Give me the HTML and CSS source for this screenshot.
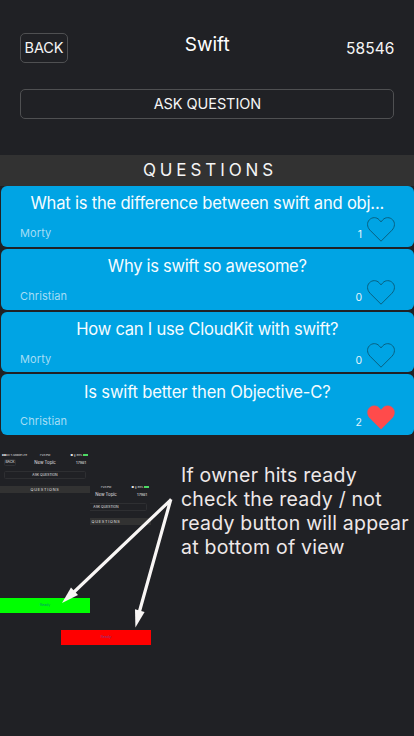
FILE: index.html
```html
<!DOCTYPE html>
<html lang="en">
<head>
<meta charset="utf-8">
<title>Swift</title>
<link rel="stylesheet" href="styles.css">
</head>
<body>
<svg class="defs" width="0" height="0"><symbol id="heart" viewBox="0 0 28 25"><path d="M14 24.2 L3 13.2 C-.2 9.7 -.1 5.4 2.3 2.9 C5.2 -.2 9.6 .1 12.1 2.7 L14 4.9 L15.9 2.7 C18.4 .1 22.8 -.2 25.7 2.9 C28.1 5.4 28.2 9.7 25 13.2 Z"/></symbol></svg>
<header class="top">
  <button class="btn back">BACK</button>
  <h1 class="title">Swift</h1>
  <span class="code">58546</span>
</header>
<button class="btn ask">ASK QUESTION</button>
<h2 class="band">QUESTIONS</h2>
<main class="list">
  <article class="card"><h3 class="q q1">What is the difference between swift and obj...</h3><div class="meta"><span class="author">Morty</span><span class="votes">1</span><svg class="heart"><use href="#heart"/></svg></div></article>
  <article class="card"><h3 class="q q2">Why is swift so awesome?</h3><div class="meta"><span class="author">Christian</span><span class="votes">0</span><svg class="heart"><use href="#heart"/></svg></div></article>
  <article class="card"><h3 class="q q3">How can I use CloudKit with swift?</h3><div class="meta"><span class="author">Morty</span><span class="votes">0</span><svg class="heart"><use href="#heart"/></svg></div></article>
  <article class="card"><h3 class="q q4">Is swift better then Objective-C?</h3><div class="meta"><span class="author">Christian</span><span class="votes">2</span><svg class="heart liked"><use href="#heart"/></svg></div></article>
</main>
<section class="notes">
  <div class="mini mini-red">
    <div class="status"><span class="carrier"><i>●●●○○</i> T-Mobile LTE</span><span>7:23 PM</span><span class="right">■ ∦ 98%<i class="battery"></i></span></div>
    <div class="mini-top"><span class="mini-back">BACK</span><span class="mini-title">New Topic</span><span class="mini-code">17981</span></div>
    <div class="mini-ask">ASK QUESTION</div>
    <div class="mini-band">QUESTIONS</div>
    <div class="ready red">Ready</div>
  </div>
  <div class="mini mini-green">
    <div class="status"><span class="carrier"><i>●●●○○</i> T-Mobile LTE</span><span>7:23 PM</span><span class="right">■ ∦ 98%<i class="battery"></i></span></div>
    <div class="mini-top"><span class="mini-back">BACK</span><span class="mini-title">New Topic</span><span class="mini-code">17981</span></div>
    <div class="mini-ask">ASK QUESTION</div>
    <div class="mini-band">QUESTIONS</div>
    <div class="ready green">Ready</div>
  </div>
  <svg class="arrows" viewBox="0 435 414 301">
    <path class="shaft" d="M171.3 499.3 L74 592 M170.8 499.3 L139.3 612"/>
    <path class="tip" d="M62 603 L71 587.5 L78 595 Z"/>
    <path class="tip" d="M135.4 627.5 L135 609.3 L144.6 612 Z"/>
  </svg>
  <p class="caption">If owner hits ready<br>check the ready / not<br>ready button will appear<br>at bottom of view</p>
</section>
</body>
</html>
```
FILE: styles.css
```css
* { box-sizing: border-box; }
body { margin: 0; width: 414px; height: 736px; overflow: hidden; background: #202125; color: #f5f5f5; font-family: Inter, "Liberation Sans", sans-serif; }
h1, h2, h3, p { margin: 0; font-weight: 400; }
.defs { position: absolute; }
.btn { display: block; padding: 0; height: 30px; background: none; color: #f5f5f5; border: 1px solid #4f5052; border-radius: 5px; font: 400 14.5px/28px Inter, sans-serif; letter-spacing: -.07px; text-align: center; }
.top { display: grid; grid-template-columns: 48px 1fr 48px; height: 88.5px; padding: 32.5px 19.5px 0 20px; }
.title { font-size: 19px; line-height: 24px; text-align: center; letter-spacing: 0; color: #fff; }
.code { font-size: 15.5px; line-height: 31px; text-align: right; white-space: nowrap; letter-spacing: .1px; justify-self: end; }
.ask { width: 374px; margin: 0 20.4px; }
.band { height: 31.5px; margin-top: 36px; background: #323232; font-size: 17px; line-height: 31px; letter-spacing: 3.9px; text-align: center; padding-left: 6px; }
.list { display: flex; flex-direction: column; gap: 2px; padding: 0 0 0 1px; }
.card { height: 60.75px; width: 412.5px; background: #00a4e4; border-radius: 6px; }
.q { height: 31px; padding-top: 5px; font-size: 16.6px; line-height: 24px; color: #f6fcff; text-align: center; white-space: nowrap; }
.q1 { letter-spacing: -.22px; }
.q2 { letter-spacing: -.32px; padding-top: 5.5px; }
.q3 { letter-spacing: -.25px; }
.q4 { letter-spacing: -.18px; padding-top: 5.5px; }
.meta { display: flex; height: 29px; padding: 0 19px 0 19px; align-items: flex-start; }
.author { flex: 1; font-size: 11px; line-height: 33px; color: #a5ddf5; letter-spacing: .1px; }
.votes { font-size: 10.5px; line-height: 35px; color: #e3f5fc; margin-right: 4.5px; }
.heart { width: 28px; height: 25px; fill: none; stroke: #096080; stroke-width: 1px; }
.liked { fill: #ff4b4b; stroke: #ff4b4b; stroke-width: .4px; }
.notes { position: relative; height: 301px; }
.caption { position: absolute; left: 181px; top: 28px; font-size: 19.5px; line-height: 24px; letter-spacing: .22px; color: #eee8e8; white-space: nowrap; }
.arrows { position: absolute; left: 0; top: 0; width: 414px; height: 301px; }
.shaft { fill: none; stroke: #f9f6f5; stroke-width: 3.2px; }
.tip { fill: #f9f6f5; }
.mini { position: absolute; width: 90px; height: 160px; background: #202125; display: flex; flex-direction: column; color: #e0e0e0; font-size: 3.8px; line-height: 4px; }
.mini-green { left: 0; top: 18px; }
.mini-red { left: 61px; top: 50px; }
.status { display: grid; grid-template-columns: minmax(0, 1fr) auto minmax(0, 1fr); height: 6px; padding: 0 2px; font-size: 2.7px; white-space: nowrap; }
.carrier i { font-size: 1.7px; font-style: normal; }
.right { display: flex; justify-content: flex-end; align-items: center; gap: .5px; height: 4px; }
.battery { width: 5px; height: 2px; background: #4cd964; }
.mini-top { display: grid; grid-template-columns: 12px 1fr 12px; padding: 0 4px; height: 12.3px; line-height: 7px; }
.mini-back { border: 1px solid #303135; border-radius: 1.5px; height: 7px; line-height: 5px; text-align: center; font-size: 3.4px; }
.mini-title { text-align: center; font-size: 4.3px; line-height: 7px; }
.mini-code { text-align: right; }
.mini-ask { margin: 0 4px; height: 7.5px; line-height: 6px; border: 1px solid #2e2f32; border-radius: 1.5px; text-align: center; flex: none; font-size: 3.4px; }
.mini-band { margin-top: 7.2px; height: 7px; line-height: 7px; background: #323232; text-align: center; font-size: 3.8px; letter-spacing: .75px; }
.ready { margin-top: auto; height: 15px; line-height: 15px; text-align: center; font-size: 3.6px; }
.green { background: #00ff01; color: #009b70; }
.red { background: #ff0000; color: #87388a; }
```
